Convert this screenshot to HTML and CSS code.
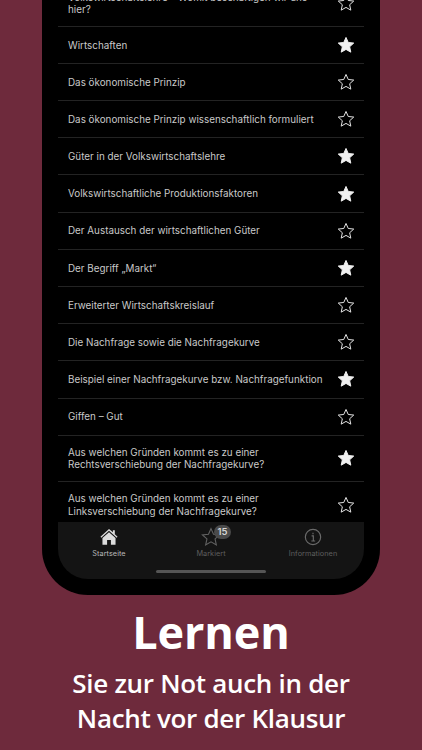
FILE: index.html
```html
<!DOCTYPE html>
<html lang="de">
<head>
<meta charset="utf-8">
<title>Lernen</title>
<link rel="stylesheet" href="styles.css">
</head>
<body>
<svg class="defs" width="0" height="0" aria-hidden="true">
  <defs>
    <path id="star" d="M10 1.6l2.5 5.6 6.1.65-4.55 4.1 1.28 6-5.33-3.07-5.33 3.07 1.28-6-4.55-4.1 6.1-.65z"/>
  </defs>
</svg>
<main class="phone">
  <div class="screen">
    <ul class="list">
      <li class="row two first"><span>Volkswirtschaftslehre – Womit beschäftigen wir uns hier?</span><svg class="star" viewBox="0 0 20 20"><use href="#star"/></svg></li>
      <li class="row"><span>Wirtschaften</span><svg class="star on" viewBox="0 0 20 20"><use href="#star"/></svg></li>
      <li class="row"><span>Das ökonomische Prinzip</span><svg class="star" viewBox="0 0 20 20"><use href="#star"/></svg></li>
      <li class="row"><span>Das ökonomische Prinzip wissenschaftlich formuliert</span><svg class="star" viewBox="0 0 20 20"><use href="#star"/></svg></li>
      <li class="row"><span>Güter in der Volkswirtschaftslehre</span><svg class="star on" viewBox="0 0 20 20"><use href="#star"/></svg></li>
      <li class="row"><span>Volkswirtschaftliche Produktionsfaktoren</span><svg class="star on" viewBox="0 0 20 20"><use href="#star"/></svg></li>
      <li class="row"><span>Der Austausch der wirtschaftlichen Güter</span><svg class="star" viewBox="0 0 20 20"><use href="#star"/></svg></li>
      <li class="row"><span>Der Begriff „Markt“</span><svg class="star on" viewBox="0 0 20 20"><use href="#star"/></svg></li>
      <li class="row"><span>Erweiterter Wirtschaftskreislauf</span><svg class="star" viewBox="0 0 20 20"><use href="#star"/></svg></li>
      <li class="row"><span>Die Nachfrage sowie die Nachfragekurve</span><svg class="star" viewBox="0 0 20 20"><use href="#star"/></svg></li>
      <li class="row"><span>Beispiel einer Nachfragekurve bzw. Nachfragefunktion</span><svg class="star on" viewBox="0 0 20 20"><use href="#star"/></svg></li>
      <li class="row"><span>Giffen – Gut</span><svg class="star" viewBox="0 0 20 20"><use href="#star"/></svg></li>
      <li class="row two"><span>Aus welchen Gründen kommt es zu einer Rechtsverschiebung der Nachfragekurve?</span><svg class="star on" viewBox="0 0 20 20"><use href="#star"/></svg></li>
      <li class="row two"><span>Aus welchen Gründen kommt es zu einer Linksverschiebung der Nachfragekurve?</span><svg class="star" viewBox="0 0 20 20"><use href="#star"/></svg></li>
    </ul>
    <nav class="tabs">
      <div class="tab-row">
        <div class="tab active">
          <svg class="tab-icon" viewBox="1 2 22 20"><path class="fill" d="M12 3.2 2.6 11.6l.9 1.1L12 5.2l8.5 7.5.9-1.1-3-2.7V4.600h-2.100v2.100z"/><path class="fill" d="M12 6.700 4.800 13v7.600h5.100v-5.200h4.200v5.200h5.100V13z"/></svg>
          <span>Startseite</span>
        </div>
        <div class="tab">
          <div class="badge-wrap">
            <svg class="tab-icon" viewBox="0 0 20 20"><use href="#star" class="outline"/></svg>
            <b class="badge">15</b>
          </div>
          <span>Markiert</span>
        </div>
        <div class="tab">
          <svg class="tab-icon info" viewBox="0 0 24 24"><circle cx="12" cy="12" r="9.200"/><path d="M10.300 10.600h2.100v6M10 16.800h4.600M12 7v1.800"/></svg>
          <span>Informationen</span>
        </div>
      </div>
      <div class="home-bar"></div>
    </nav>
  </div>
</main>
<section class="caption">
  <h1>Lernen</h1>
  <p>Sie zur Not auch in der<br>Nacht vor der Klausur</p>
</section>
</body>
</html>
```

FILE: styles.css
```css
* { box-sizing: border-box; }
html, body { margin: 0; padding: 0; }
body {
  width: 422px;
  height: 750px;
  overflow: hidden;
  background: #6e2a3c;
  font-family: Inter, "Liberation Sans", sans-serif;
}
.defs { display: block; height: 0; }
.phone {
  width: 338px;
  height: 595px;
  margin: 0 auto;
  padding: 0 16px 16px;
  background: #000;
  border-radius: 0 0 46px 46px;
}
.screen {
  height: 579px;
  display: flex;
  flex-direction: column;
  overflow: hidden;
  border-radius: 0 0 30px 30px;
  background: #000;
}
.list {
  flex: 1;
  min-height: 0;
  margin: 0;
  padding: 0;
  list-style: none;
  overflow: hidden;
}
.row {
  height: 37.200px;
  display: flex;
  align-items: center;
  justify-content: space-between;
  padding: 0 9px 0 10px;
  border-bottom: 1px solid #232323;
  color: #c9c9c9;
  font-size: 9.850px;
  line-height: 12.500px;
}
.row span { width: 262px; }
.row.two { height: 46px; }
.row.first { margin-top: -19.300px; }
.row:last-child { border-bottom: 0; }
.star {
  width: 18px;
  height: 18px;
  flex: none;
  fill: none;
  stroke: #e6e6e6;
  stroke-width: 1.100;
}
.star.on { fill: #f0f0f0; stroke: #f0f0f0; }
.tabs {
  height: 57px;
  flex: none;
  display: flex;
  flex-direction: column;
  align-items: center;
  background: #141414;
}
.tab-row {
  width: 100%;
  display: flex;
  justify-content: space-between;
  padding-top: 5px;
}
.tab {
  width: 102px;
  display: flex;
  flex-direction: column;
  align-items: center;
  gap: 2px;
  color: #5f5f5f;
  font-size: 7.300px;
  line-height: 10px;
  letter-spacing: 0.050px;
}
.tab.active { color: #b9b9b9; }
.tab-icon {
  width: 20px;
  height: 20px;
  display: block;
}
.tab-icon .outline {
  fill: none;
  stroke: #626262;
  stroke-width: 1.100;
}
.tab-icon .fill { fill: #dcdcdc; }
.info {
  fill: none;
  stroke: #6a6a6a;
  stroke-width: 1.400;
}
.badge-wrap { position: relative; }
.badge {
  position: absolute;
  left: 13px;
  top: -2px;
  width: 17px;
  height: 14px;
  border-radius: 7px;
  background: #4a4a4a;
  color: #d6d6d6;
  font-size: 9.500px;
  font-weight: 600;
  line-height: 14px;
  text-align: center;
}
.home-bar {
  width: 110px;
  height: 3px;
  margin-top: 11px;
  border-radius: 2px;
  background: #555;
}
.caption {
  margin-top: 9px;
  text-align: center;
  color: #fff;
  font-family: "Open Sans", "Noto Sans", sans-serif;
}
.caption h1 {
  margin: 0;
  font-size: 45px;
  line-height: 56px;
  font-weight: 700;
  letter-spacing: -0.100px;
}
.caption p {
  margin: 6px 0 0;
  font-size: 26px;
  line-height: 35px;
  font-weight: 600;
  letter-spacing: -0.300px;
}
```
